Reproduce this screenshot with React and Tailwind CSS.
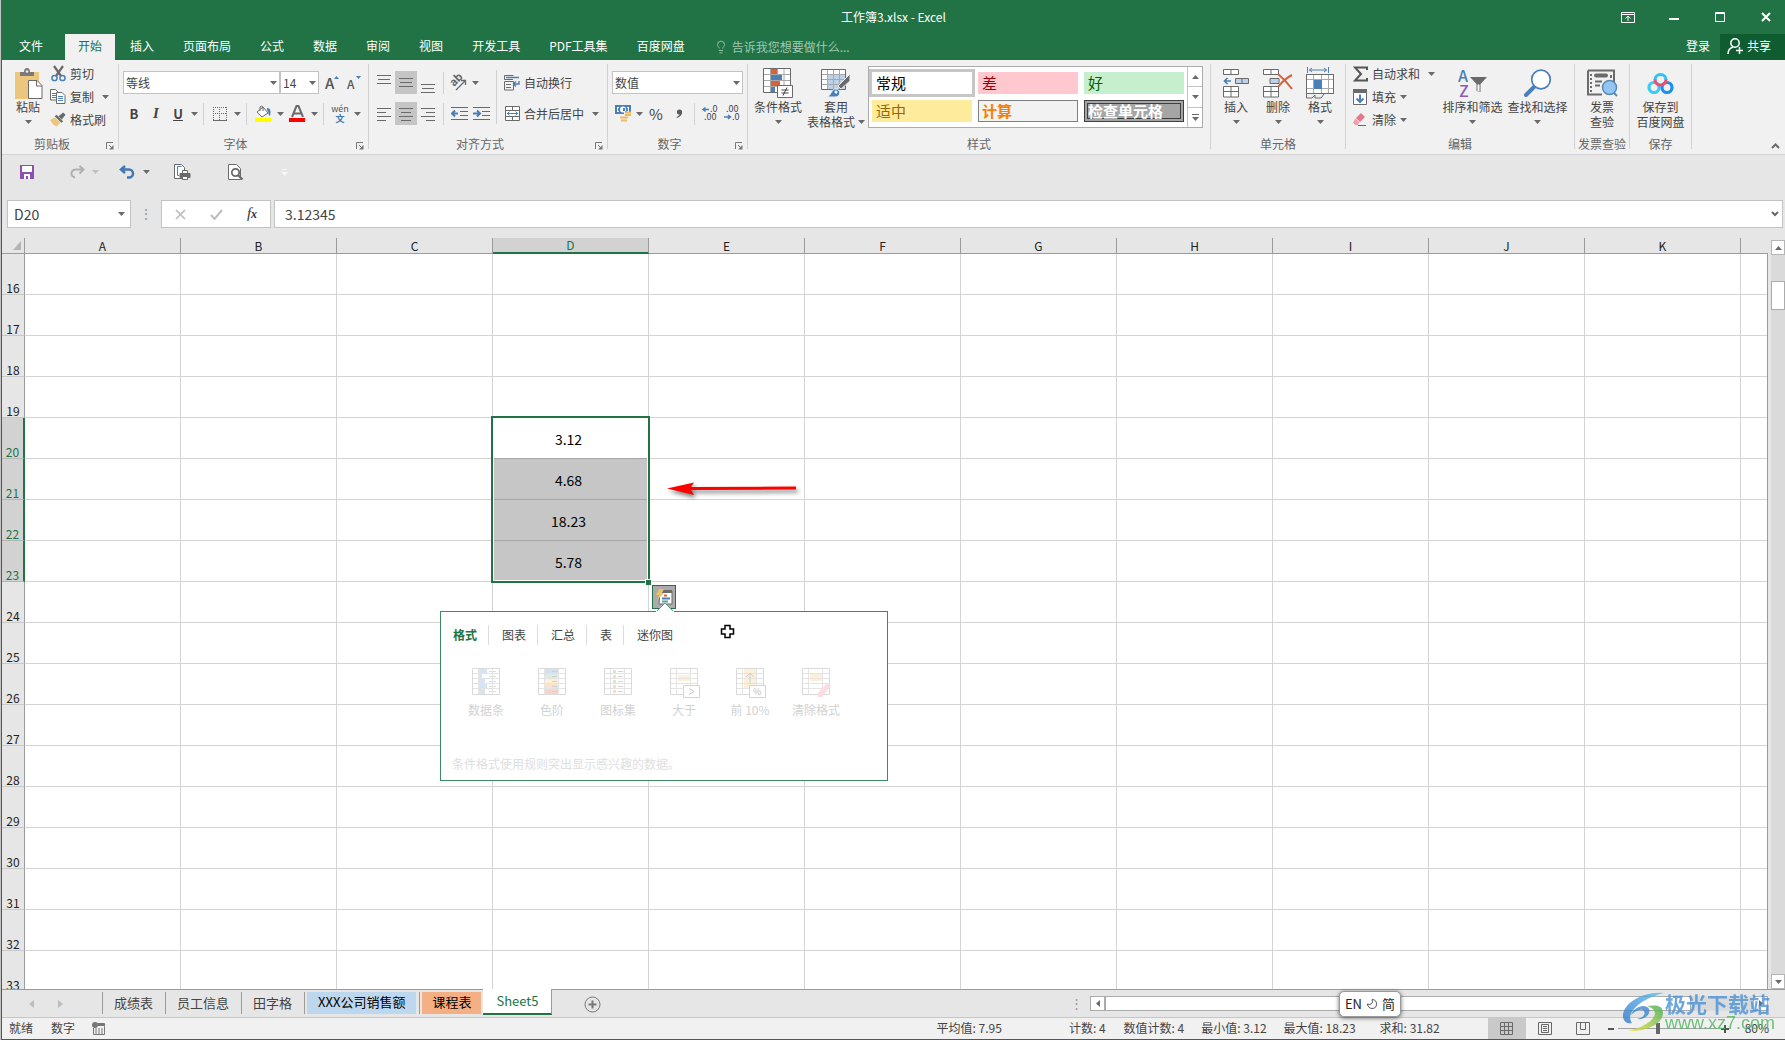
import React, { useState } from "react";
import clsx from "clsx";
import { Moon, Lightbulb } from "lucide-react";

const GRAY = "#6a6a6a";
const BLUE = "#4a7fb8";

const menuTabs = ["插入", "页面布局", "公式", "数据", "审阅", "视图", "开发工具", "PDF工具集", "百度网盘"];
const columns = ["A", "B", "C", "D", "E", "F", "G", "H", "I", "J", "K", ""];
const rows = Array.from({ length: 18 }, (_, i) => i + 16);
const values = { 20: "3.12", 21: "4.68", 22: "18.23", 23: "5.78" };

/* ---------- small pieces ---------- */

const Caret = ({ color = "#6a6a6a" }) => (
    <svg width="7" height="4" viewBox="0 0 7 4" className="shrink-0">
        <path d="M0 0h7L3.5 4z" fill={color} />
    </svg>
);

const CaretButton = ({ label }) => (
    <button aria-label={label} className="flex h-full w-[10px] shrink-0 items-center justify-center">
        <Caret />
    </button>
);

const Tool = ({ label, active, wide, children }) => (
    <button
        aria-label={label}
        className={clsx(
            "flex h-[23px] shrink-0 items-center justify-center",
            wide ? "w-6" : "w-[22px]",
            active && "bg-[#c5c5c5]"
        )}
    >
        {children}
    </button>
);

const Sep = () => <div className="mx-1 h-[22px] w-px shrink-0 bg-[#d2d2d2]" />;

const Divider = () => <div className="mb-[5px] mt-1 w-px shrink-0 bg-[#d2d2d2]" />;

const Group = ({ label, launcher, className, children }) => (
    <section className={clsx("flex shrink-0 flex-col", className)}>
        <div className="flex h-[76px]">{children}</div>
        <div className="flex h-4 items-center text-[#666]">
            <span className="flex-1 whitespace-nowrap text-center leading-4">{label}</span>
            {launcher && (
                <button aria-label={label + "设置"} className="mt-1 flex w-4 justify-end pr-1">
                    <svg width="8" height="8" viewBox="0 0 8 8" fill="none" stroke="#777">
                        <path d="M.5 7V.5H7M3 3l3 3" />
                        <path d="M7.500 3v4.500H3z" fill="#777" stroke="none" />
                    </svg>
                </button>
            )}
        </div>
    </section>
);

const BigButton = ({ icon, lines, caret = true, className }) => (
    <button className={clsx("flex shrink-0 flex-col items-center pt-[7px]", className)}>
        <span className="flex h-8 items-center">{icon}</span>
        <span className="whitespace-nowrap leading-[15px]">{lines[0]}</span>
        <span className="flex h-[15px] items-center gap-[3px] whitespace-nowrap leading-[15px]">
            {lines[1]}
            {caret && <Caret />}
        </span>
    </button>
);

const SmallButton = ({ icon, children, caret }) => (
    <button className="flex h-[23px] items-center gap-1 whitespace-nowrap">
        <span className="flex w-4 justify-center">{icon}</span>
        {children}
        {caret && <span className={caret}><Caret /></span>}
    </button>
);

const Combo = ({ label, value, className }) => (
    <div className={clsx("relative h-[23px] shrink-0 border border-[#c3c3c3] bg-white", className)}>
        <select aria-label={label} className="h-full w-full appearance-none bg-transparent pl-[2px] outline-none">
            <option>{value}</option>
        </select>
        <span className="pointer-events-none absolute right-[2px] top-[9px]"><Caret /></span>
    </div>
);

/* ---------- ribbon icons ---------- */

const PasteIcon = () => (
    <svg width="29" height="31" viewBox="0 0 29 31">
        <path d="M1 4h24v27H1z" fill="#edc67d" />
        <path d="M6 4h4a3 4 0 0 1 6 0h4v4H6z" fill="#7a7a7a" />
        <circle cx="13" cy="3.500" r="1.300" fill="#f0f0f0" />
        <path d="M14.500 12.500h8.500l5 5v13H14.500z" fill="#fff" stroke={GRAY} />
        <path d="M22.500 12.500v5.500h5.500" fill="none" stroke={GRAY} />
    </svg>
);
const CutIcon = () => (
    <svg width="15" height="17" viewBox="0 0 15 17" fill="none">
        <path d="M3 1l7 10M12 1L5 11" stroke={GRAY} strokeWidth="2.200" />
        <circle cx="3.500" cy="13" r="2.600" stroke={BLUE} strokeWidth="1.500" />
        <circle cx="11.500" cy="13" r="2.600" stroke={BLUE} strokeWidth="1.500" />
    </svg>
);
const CopyIcon = () => (
    <svg width="16" height="15" viewBox="0 0 16 15" fill="#fff" stroke={GRAY}>
        <path d="M.5.500h5l2.500 2.500v8H.5z" />
        <path d="M2 4.500h4M2 6.500h4M2 8.500h4" stroke={BLUE} />
        <path d="M6.500 3.500h5.500l3 3v8H6.500z" />
        <path d="M8 7.500h5M8 9.500h5M8 11.500h5" stroke={BLUE} />
    </svg>
);
const BrushIcon = () => (
    <svg width="17" height="15" viewBox="0 0 17 15">
        <path d="M0 8l5-3 6 6-4 4c-3-1-5-4-7-7z" fill="#edc67d" />
        <path d="M5 4l2-1.500 7 7L12 11z" fill={GRAY} />
        <path d="M9 4l5-4 2.500 2.500-4 5z" fill={GRAY} />
    </svg>
);
const GrowFont = ({ down }) => (
    <svg width="17" height="16" viewBox="0 0 17 16" className="overflow-visible">
        <text x="0" y="14" fontSize={down ? 12 : 15} fontWeight="500" fill="#555" fontFamily="Noto Sans CJK SC, sans-serif">A</text>
        <path d={down ? "M9 1h5l-2.500 3z" : "M9 4h5l-2.500-3z"} fill={BLUE} />
    </svg>
);
const BordersIcon = () => (
    <svg width="14" height="14" viewBox="0 0 14 14" fill="none" stroke={GRAY}>
        <path d="M0 .5h14M0 6.500h14M.5 0v13M6.500 0v13M13.500 0v13" strokeDasharray="1 1" />
        <path d="M0 13.500h14" />
    </svg>
);
const FillIcon = () => (
    <svg width="17" height="17" viewBox="0 0 17 17">
        <path d="M2 7l6-5 5 6-6 4z" fill="#fff" stroke={GRAY} />
        <path d="M5 6V2a2 2 0 0 1 3 0v4" fill="none" stroke={GRAY} />
        <path d="M12 3c4 0 4 4 3 8-2-1-1-4-3-6z" fill={BLUE} />
        <path d="M0 13h16v4H0z" fill="#ffff00" />
    </svg>
);
const FontColorIcon = () => (
    <svg width="17" height="17" viewBox="0 0 17 17">
        <path d="M3 12L7.500 1h2L14 12M5 8.500h7" fill="none" stroke={GRAY} strokeWidth="2" />
        <path d="M0 13h16v4H0z" fill="#ff0000" />
    </svg>
);
const PhoneticIcon = () => (
    <span className="flex flex-col items-center">
        <span className="text-[9px] leading-[10px] text-[#555]">wén</span>
        <span className="text-[9px] font-bold leading-[10px] text-[#3f76b4]">文</span>
    </span>
);
const LinesIcon = ({ d }) => (
    <svg width="14" height="22" viewBox="0 0 14 22" fill="none" stroke={GRAY}>
        <path d={d} />
    </svg>
);
const OrientIcon = () => (
    <svg width="18" height="16" viewBox="0 0 18 16" className="overflow-visible">
        <text x="0" y="0" fontSize="11" fontWeight="700" fill="#666" transform="translate(4 12) rotate(-45)" fontFamily="Noto Sans CJK SC, sans-serif">ab</text>
        <path d="M6 15l9-9M11 5.500h4.500V10" fill="none" stroke={GRAY} strokeWidth="1.300" />
    </svg>
);
const IndentIcon = ({ flip }) => (
    <svg width="17" height="14" viewBox="0 0 17 14" fill="none" stroke={GRAY}>
        <path d="M0 .5h17M9 4.500h8M9 8.500h8M0 12.500h17" />
        <path d={flip ? "M0 6.500h6M4 3.500l3 3-3 3" : "M7 6.500H1M4 3.500l-3 3 3 3"} stroke={BLUE} strokeWidth="2" />
    </svg>
);
const WrapIcon = () => (
    <svg width="16" height="16" viewBox="0 0 16 16" fill="none" stroke={GRAY}>
        <path d="M9 4.500H.5v-4H9.500M.5 6.500h9v8.500H.5zM2 9.500h5M2 12.500h5" />
        <path d="M2 2.500h13M15 6v3H10M12 6.500L9.500 9l2.500 2.500" stroke={BLUE} strokeWidth="1.400" />
    </svg>
);
const MergeIcon = () => (
    <svg width="15" height="15" viewBox="0 0 15 15" fill="#fff" stroke={GRAY}>
        <path d="M.5.5h14v14H.5zM.5 4.500h14M.5 10.500h14M7.500 0v4M7.500 11v4" />
        <path d="M2 7.500h11M4.500 5.500l-2 2 2 2M10.500 5.500l2 2-2 2" stroke={BLUE} fill="none" />
    </svg>
);
const MoneyIcon = () => (
    <svg width="17" height="17" viewBox="0 0 17 17">
        <path d="M0 0h16v9H0z" fill={BLUE} />
        <path d="M2 2h2v1H3v3h1v1H2zM14 2h-2v1h1v3h-1v1h2z" fill="#fff" />
        <circle cx="8" cy="4.500" r="3" fill="#fff" />
        <path d="M8 3h2v3H8z" fill={BLUE} />
        <path d="M9 7h8v10H4v-6h5z" fill="#f1f1f1" />
        <path d="M10 7.500h6M10 10h6M5 12.500h8M6 15.500h6" stroke="#edb965" strokeWidth="2" />
    </svg>
);
const DecimalIcon = ({ less }) => (
    <svg width="16" height="15" viewBox="0 0 16 15" fill="#444" fontSize="9" fontFamily="Noto Sans CJK SC, sans-serif" className="overflow-visible">
        <text x={less ? 2 : 8} y="6">{less ? ".00" : ".0"}</text>
        <text x={less ? 8 : 2} y="14">{less ? ".0" : ".00"}</text>
        <path d={less ? "M0 11h6M4 9l2.500 2L4 13" : "M7 3.500H1M3.500 1.500L1 3.500l2.500 2"} fill="none" stroke={BLUE} strokeWidth="1.500" />
    </svg>
);
const ConditionalIcon = () => (
    <svg width="30" height="31" viewBox="0 0 30 31">
        <path d="M.5.5h27v24H.5z" fill="#fff" />
        <path d="M.5 6.500h27M.5 12.500h27M.5 18.500h27M14.500 0v24M21 0v24M7.500 0v24" stroke="#a8a8a8" fill="none" />
        <path d="M8 1h6v5H8zM8 13h9v5H8z" fill="#d9603b" />
        <path d="M8 7h11v5H8zM8 19h4v5H8z" fill={BLUE} />
        <path d="M.5.5h27v24H.5z" fill="none" stroke={GRAY} />
        <path d="M14.500 17.500h15v12h-15z" fill="#fff" stroke={GRAY} />
        <path d="M18.500 22h7M18.500 25h7M24 19.500l-4 8" stroke="#444" />
    </svg>
);
const TableFormatIcon = () => (
    <svg width="30" height="29" viewBox="0 0 30 29">
        <path d="M.5.500h24v20H.5z" fill="#fff" />
        <path d="M7 5h17v15H7z" fill="#bdd1e8" />
        <path d="M.5 5.500h24M.5 10.500h24M.5 15.500h24M6.500 0v20M12.500 0v20M18.500 0v20" stroke="#a8a8a8" />
        <path d="M.5.500h24v20H.5z" fill="none" stroke={GRAY} />
        <path d="M29 5v7l-9 8-3-3z" fill={GRAY} stroke="#f0f0f0" />
        <path d="M6 28c4-1 4-8 9-8 5 0 5 8-1 8z" fill={BLUE} stroke="#f0f0f0" />
        <circle cx="15" cy="23" r="1.500" fill="#fff" />
    </svg>
);
const InsertIcon = () => (
    <svg width="27" height="29" viewBox="0 0 27 29" fill="#fff" stroke={GRAY}>
        <path d="M.5.500h15v5H.5zM8 .5v5M.5 17.500h15v10.500H.5zM8 17.500v10.500M.5 22.500h15" />
        <path d="M12.500 9.500h13v5h-13zM19 9.500v5" fill="#bdd1e8" />
        <path d="M8 12H2M4.500 9L1.500 12l3 3" fill="none" stroke={BLUE} strokeWidth="1.700" />
    </svg>
);
const DeleteIcon = () => (
    <svg width="30" height="29" viewBox="0 0 30 29" fill="#fff" stroke={GRAY}>
        <path d="M.5.500h15v5H.5zM8 .5v5M.5 17.500h15v10.500H.5zM8 17.500v10.500M.5 22.500h15" />
        <path d="M7 9.500h9v5H7z" fill="#bdd1e8" />
        <path d="M15 5c5 4 9 8 14 15M29 6c-6 3-10 7-14 12" fill="none" stroke="#d9603b" strokeWidth="2" />
    </svg>
);
const FormatIcon = () => (
    <svg width="28" height="32" viewBox="0 0 28 32" fill="#fff" stroke={GRAY}>
        <path d="M.5 7.500h27v19H.5z" />
        <path d="M.5 12.500h27M.5 21.500h27M7.500 7v19M15.500 7v19M22.500 7v19" stroke="#a8a8a8" />
        <path d="M.5 7.500h27v19H.5zM.5 27v4H6l3-3v3h6l3-4" fill="none" />
        <path d="M8 13h8v9H8z" fill={BLUE} stroke="none" />
        <path d="M1.500 0v6M22.500 0v6M3 3h18M6 1L3.500 3 6 5M18 1l2.500 2L18 5" fill="none" stroke={BLUE} />
    </svg>
);
const SumIcon = () => (
    <svg width="15" height="16" viewBox="0 0 15 16" fill="none" stroke="#555" strokeWidth="2">
        <path d="M14 4V1.500H2L8 8l-6 6.500h12V12" />
    </svg>
);
const FillDownIcon = () => (
    <svg width="14" height="16" viewBox="0 0 14 16">
        <path d="M.5.5h13v15H.5z" fill="#fff" stroke={GRAY} />
        <path d="M0 0h14v4H0z" fill={GRAY} />
        <path d="M7 5.500v7M3.500 9.500L7 13l3.500-3.500" fill="none" stroke={BLUE} strokeWidth="2" />
    </svg>
);
const EraserIcon = () => (
    <svg width="14" height="14" viewBox="0 0 14 14">
        <path d="M8 0l4 4-5 5-4-4z" fill="#e6788c" />
        <path d="M2.500 5.500l4 4-2 2.500H2L0 9.500z" fill="#ef9fac" />
        <path d="M5 12.500h8" stroke={GRAY} />
    </svg>
);
const SortIcon = () => (
    <svg width="29" height="29" viewBox="0 0 29 29" fontSize="16" fontWeight="500" fontFamily="Noto Sans CJK SC, sans-serif" className="overflow-visible">
        <text x="0" y="13" fill={BLUE}>A</text>
        <text x="1" y="28" fill="#9059b5">Z</text>
        <path d="M12 8h17l-6.500 7v8l-4-1v-7z" fill={GRAY} />
        <path d="M19.500 15.500v6.500l2 .500v-7z" fill="#fff" />
    </svg>
);
const FindIcon = () => (
    <svg width="28" height="28" viewBox="0 0 28 28">
        <path d="M2 26l9-9" stroke={BLUE} strokeWidth="4" strokeLinecap="round" />
        <circle cx="17" cy="10.500" r="9.300" fill="#fff" stroke={BLUE} strokeWidth="1.700" />
    </svg>
);
const InvoiceIcon = () => (
    <svg width="31" height="28" viewBox="0 0 31 28" fill="none" stroke="#6b6b6b">
        <path d="M1 1.500h26V14M1 1.500v24h14" strokeWidth="2" />
        <path d="M4 5v18" strokeDasharray="2 2" strokeWidth="2" />
        <path d="M9 6.500h10" strokeWidth="4" strokeLinecap="round" />
        <path d="M8 12.500h7M8 16.500h5M24 6v3" strokeWidth="2" />
        <circle cx="22.500" cy="18.500" r="7" fill="#93c6f3" stroke="#5c88b5" strokeWidth="1.500" />
        <path d="M27 24l3 3" stroke="#5c88b5" strokeWidth="2" />
    </svg>
);
const NetdiskIcon = () => (
    <svg width="27" height="25" viewBox="0 0 27 25" fill="none" strokeWidth="3.200">
        <circle cx="7" cy="16.500" r="5" stroke="#3ccbf6" />
        <circle cx="20" cy="16.500" r="5" stroke="#1b8ff0" />
        <path d="M8 9a5.500 5.500 0 0 1 11 0" stroke="#31c3f5" />
        <path d="M8 8.500a5.500 5.500 0 0 0 11 0" stroke="#f0506e" />
    </svg>
);

/* ---------- window header ---------- */

const TitleBar = () => (
    <header className="bg-[#217346] text-white">
        <div className="relative flex h-[34px] items-center justify-end">
            <h1 className="absolute inset-x-0 text-center leading-[18px]">工作簿3.xlsx - Excel</h1>
            <div className="relative flex items-center gap-2">
                <button aria-label="功能区显示选项" className="flex w-[38px] justify-center">
                    <svg width="14" height="11" viewBox="0 0 14 11" fill="none" stroke="#fff">
                        <path d="M.5.5h13v10H.5zM.5 2.500h13M7 9V4.500M4.500 6.500L7 4l2.500 2.500" />
                    </svg>
                </button>
                <button aria-label="最小化" className="flex w-[38px] justify-center">
                    <svg width="10" height="11"><path d="M0 6h10v2H0z" fill="#fff" /></svg>
                </button>
                <button aria-label="最大化" className="flex w-[38px] justify-center">
                    <svg width="10" height="10" fill="none" stroke="#fff"><path d="M.5.5h9v9H.5zM0 1.500h10" /></svg>
                </button>
                <button aria-label="关闭" className="flex w-[38px] justify-center">
                    <svg width="10" height="10" stroke="#fff" strokeWidth="2"><path d="M1 1l8 8M9 1L1 9" /></svg>
                </button>
            </div>
        </div>
        <div className="flex h-[26px] items-center">
            <nav className="flex h-full items-center">
                <button className="h-full pb-[2px] pl-[17px] pr-[22px]">文件</button>
                <button className="h-full bg-[#f1f1f1] px-[13px] pb-[2px] text-[#217346]">开始</button>
                <div className="w-px" />
                {menuTabs.map(tab => (
                    <button key={tab} className="h-full whitespace-nowrap pb-[2px] pl-[14px] pr-[15px]">{tab}</button>
                ))}
            </nav>
            <label className="ml-[14px] flex flex-1 items-center gap-1 text-[#a0c7b0]">
                <Lightbulb size={14} strokeWidth={1.5} />
                <input
                    placeholder="告诉我您想要做什么..."
                    className="w-[160px] bg-transparent outline-none placeholder:text-[#a0c7b0]"
                />
            </label>
            <a href="#login" className="px-[10px] pb-[2px]">登录</a>
            <button className="flex h-full items-center gap-1 bg-[#0e5c2f] pb-[2px] pl-[7px] pr-[14px]">
                <svg width="16" height="17" viewBox="0 0 16 17" fill="none" stroke="#fff" strokeWidth="1.500">
                    <circle cx="8" cy="5" r="4.200" />
                    <path d="M1 16c0-4 2-6 5-7M12.500 9v7M9 12.500h7" />
                </svg>
                共享
            </button>
        </div>
    </header>
);

const styleCells = [
    ["常规", "px-1 bg-white text-black ring-[3px] ring-[#c6c6c6]"],
    ["差", "px-1 bg-[#ffc7ce] text-[#9c0006]"],
    ["好", "px-1 bg-[#c6efce] text-[#006100]"],
    ["适中", "px-1 bg-[#ffeb9c] text-[#9c6500]"],
    ["计算", "px-[3px] bg-[#f2f2f2] border border-[#7f7f7f] font-bold text-[#fa7d00]"],
    ["检查单元格", "bg-[#a5a5a5] border-4 border-double border-[#3f3f3f] font-bold text-white"],
];

const Ribbon = () => (
    <div className="flex h-[95px] overflow-hidden border-b border-[#d2d2d2] bg-[#f1f1f1] text-[#444]">
        <Group label="剪贴板" launcher className="w-[116px]">
            <BigButton icon={<PasteIcon />} lines={["粘贴"]} className="ml-2 w-[36px]" />
            <div className="ml-1 flex flex-col pt-[2px]">
                <SmallButton icon={<CutIcon />}>剪切</SmallButton>
                <SmallButton icon={<CopyIcon />} caret="ml-1">复制</SmallButton>
                <SmallButton icon={<BrushIcon />}>格式刷</SmallButton>
            </div>
        </Group>
        <Divider />
        <Group label="字体" launcher className="w-[249px]">
            <div className="flex flex-col gap-2 pl-1 pt-[11px]">
                <div className="flex">
                    <Combo label="字体" value="等线" className="w-[157px]" />
                    <Combo label="字号" value="14" className="w-[39px]" />
                    <div className="ml-[3px] flex">
                        <Tool label="增大字号"><GrowFont /></Tool>
                        <Tool label="减小字号"><GrowFont down /></Tool>
                    </div>
                </div>
                <div className="flex items-center">
                    <Tool label="加粗"><b className="text-[13px]">B</b></Tool>
                    <Tool label="倾斜"><i className="font-['Liberation_Serif'] text-[15px] font-bold">I</i></Tool>
                    <Tool label="下划线"><u className="text-[13px] font-bold">U</u></Tool>
                    <CaretButton label="下划线选项" />
                    <Sep />
                    <Tool wide label="边框"><BordersIcon /></Tool>
                    <CaretButton label="边框选项" />
                    <Sep />
                    <Tool wide label="填充颜色"><FillIcon /></Tool>
                    <CaretButton label="填充颜色选项" />
                    <Tool wide label="字体颜色"><FontColorIcon /></Tool>
                    <CaretButton label="字体颜色选项" />
                    <Sep />
                    <Tool wide label="拼音"><PhoneticIcon /></Tool>
                    <CaretButton label="拼音选项" />
                </div>
            </div>
        </Group>
        <Divider />
        <Group label="对齐方式" launcher className="w-[238px]">
            <div className="flex flex-col gap-2 pl-1 pt-[11px]">
                <div className="flex items-center">
                    <Tool label="顶端对齐"><LinesIcon d="M0 3.500h14M1 7.500h12M0 11.500h14" /></Tool>
                    <Tool label="垂直居中" active><LinesIcon d="M0 6.500h14M1 10.500h12M0 14.500h14" /></Tool>
                    <Tool label="底端对齐"><LinesIcon d="M0 12.500h14M1 16.500h12M0 20.500h14" /></Tool>
                    <Sep />
                    <Tool label="方向"><OrientIcon /></Tool>
                    <CaretButton label="方向选项" />
                </div>
                <div className="flex items-center">
                    <Tool label="左对齐"><LinesIcon d="M0 5.500h14M0 9.500h9M0 13.500h14M0 17.500h9" /></Tool>
                    <Tool label="居中" active><LinesIcon d="M0 5.500h14M2 9.500h10M0 13.500h14M2 17.500h10" /></Tool>
                    <Tool label="右对齐"><LinesIcon d="M0 5.500h14M5 9.500h9M0 13.500h14M5 17.500h9" /></Tool>
                    <Sep />
                    <Tool label="减少缩进量"><IndentIcon /></Tool>
                    <Tool label="增加缩进量"><IndentIcon flip /></Tool>
                </div>
            </div>
            <div className="ml-1 mt-[10px] h-[54px] w-px bg-[#d2d2d2]" />
            <div className="flex flex-col gap-2 pl-[7px] pt-[11px]">
                <SmallButton icon={<WrapIcon />}>自动换行</SmallButton>
                <SmallButton icon={<MergeIcon />} caret="ml-1">合并后居中</SmallButton>
            </div>
        </Group>
        <Divider />
        <Group label="数字" launcher className="w-[139px]">
            <div className="flex flex-col gap-2 pl-1 pt-[11px]">
                <Combo label="数字格式" value="数值" className="w-[131px]" />
                <div className="flex items-center">
                    <Tool label="会计数字格式"><MoneyIcon /></Tool>
                    <CaretButton label="会计数字格式选项" />
                    <Tool wide label="百分比样式"><span className="text-[15px]">%</span></Tool>
                    <Tool label="千位分隔样式">
                        <svg width="7" height="9" viewBox="0 0 7 9" fill="#5a5a5a">
                            <circle cx="3.500" cy="3" r="2.600" />
                            <path d="M6 3c0 3-2 5-5 6l-.5-1C3 7 4 5.500 4 4z" />
                        </svg>
                    </Tool>
                    <Sep />
                    <Tool label="增加小数位数"><DecimalIcon /></Tool>
                    <Tool label="减少小数位数"><DecimalIcon less /></Tool>
                </div>
            </div>
        </Group>
        <Divider />
        <Group label="样式" className="w-[462px]">
            <BigButton icon={<ConditionalIcon />} lines={["条件格式"]} className="ml-[3px] w-[54px]" />
            <BigButton icon={<TableFormatIcon />} lines={["套用", "表格格式"]} className="w-[62px]" />
            <div className="ml-px mt-[6px] flex h-[62px] w-[335px] border border-[#ababab] bg-white">
                <div className="grid flex-1 grid-cols-3 content-start gap-[6px] px-[3px] pt-[5px]">
                    {styleCells.map(([name, look]) => (
                        <button key={name} className={clsx("flex h-[22px] items-center whitespace-nowrap text-[15px] leading-[18px]", look)}>
                            {name}
                        </button>
                    ))}
                </div>
                <div className="flex w-[15px] flex-col divide-y divide-[#c3c3c3] border-l border-[#c3c3c3]">
                    <button aria-label="上一行" className="flex flex-1 items-center justify-center"><span className="rotate-180"><Caret /></span></button>
                    <button aria-label="下一行" className="flex flex-1 items-center justify-center"><Caret /></button>
                    <button aria-label="其他" className="flex flex-1 flex-col items-center justify-center gap-[2px]">
                        <span className="h-px w-[7px] bg-[#6a6a6a]" />
                        <Caret />
                    </button>
                </div>
            </div>
        </Group>
        <Divider />
        <Group label="单元格" className="w-[134px]">
            <BigButton icon={<InsertIcon />} lines={["插入"]} className="ml-1 w-[42px]" />
            <BigButton icon={<DeleteIcon />} lines={["删除"]} className="w-[42px]" />
            <BigButton icon={<FormatIcon />} lines={["格式"]} className="w-[42px]" />
        </Group>
        <Divider />
        <Group label="编辑" className="w-[228px]">
            <div className="flex w-[94px] flex-col pl-[6px] pt-[2px]">
                <SmallButton icon={<SumIcon />} caret="ml-1">自动求和</SmallButton>
                <SmallButton icon={<FillDownIcon />} caret="ml-0">填充</SmallButton>
                <SmallButton icon={<EraserIcon />} caret="ml-0">清除</SmallButton>
            </div>
            <BigButton icon={<SortIcon />} lines={["排序和筛选"]} className="w-[65px]" />
            <BigButton icon={<FindIcon />} lines={["查找和选择"]} className="w-[65px]" />
        </Group>
        <Divider />
        <Group label="发票查验" className="w-[54px]">
            <BigButton icon={<InvoiceIcon />} lines={["发票", "查验"]} caret={false} className="w-full" />
        </Group>
        <Divider />
        <Group label="保存" className="w-[61px]">
            <BigButton icon={<NetdiskIcon />} lines={["保存到", "百度网盘"]} caret={false} className="w-full" />
        </Group>
        <Divider />
        <div className="flex flex-1 items-end justify-end pb-[5px] pr-[5px]">
            <button aria-label="折叠功能区">
                <svg width="9" height="6" fill="none" stroke={GRAY} strokeWidth="2"><path d="M1 5l3.500-3.500L8 5" /></svg>
            </button>
        </div>
    </div>
);

const QuickAccess = () => (
    <div className="flex h-[45px] items-start pl-[18px] pt-[9px]">
        <button aria-label="保存" className="flex h-4 w-[14px] items-center">
            <svg width="14" height="14" viewBox="0 0 14 14">
                <path d="M0 0h14v14H0z" fill="#8c50ae" />
                <path d="M2 1h10v6H2zM4 9h6v5H8v-3H6v3H4z" fill="#fff" />
            </svg>
        </button>
        <button aria-label="恢复" className="ml-9 flex h-4 items-center gap-[7px]">
            <svg width="15" height="14" viewBox="0 0 15 14" fill="none" stroke="#b0b0b0" strokeWidth="2">
                <path d="M13 4.500H6a4 4 0 0 0-1 8M9.500 1l4 3.500-4 4" />
            </svg>
            <Caret color="#c0c0c0" />
        </button>
        <button aria-label="撤消" className="ml-5 flex h-4 items-center gap-2">
            <svg width="16" height="14" viewBox="0 0 16 14" fill="none" stroke="#4579b4" strokeWidth="2.500">
                <path d="M2 4.500h8a4 4 0 0 1 0 8H8M6 1L2 4.500 6 8" />
            </svg>
            <Caret />
        </button>
        <button aria-label="快速打印" className="ml-6 flex h-4 items-center">
            <svg width="17" height="16" viewBox="0 0 17 16" fill="#fff" stroke={GRAY}>
                <path d="M.5.500h7l3 3v11H.5z" />
                <path d="M7.500 2.500H3.500v9H5" stroke={BLUE} fill="none" />
                <path d="M8.500 6.500h5v3h-5z" />
                <path d="M6 9.500h10v4H6z" fill={GRAY} />
                <path d="M8.500 12.500h5v3h-5z" />
            </svg>
        </button>
        <button aria-label="打印预览" className="ml-[37px] flex h-4 items-center">
            <svg width="16" height="16" viewBox="0 0 16 16" fill="#fff" stroke={GRAY}>
                <path d="M.5.500h8l4 4v11H.5z" />
                <circle cx="7.500" cy="8.500" r="3.700" strokeWidth="1.800" />
                <path d="M10 11l4.500 4.500" strokeWidth="2.200" />
            </svg>
        </button>
        <button aria-label="自定义快速访问工具栏" className="ml-[37px] flex h-4 flex-col items-center justify-center gap-[2px]">
            <span className="h-px w-[5px] bg-[#f6f6f6]" />
            <Caret color="#f6f6f6" />
        </button>
    </div>
);

const FormulaBar = () => {
    const [formula, setFormula] = useState("3.12345");
    return (
        <div className="flex h-[28px] pl-[5px] pr-[2px] text-sm text-[#444]">
            <div className="flex w-[124px] items-center border border-[#c3c3c3] bg-white pl-[6px] pr-[5px]">
                <input aria-label="名称框" defaultValue="D20" className="w-full min-w-0 bg-transparent outline-none" />
                <button aria-label="名称列表"><Caret /></button>
            </div>
            <span className="w-[30px] text-center leading-[26px] text-[#999]">⋮</span>
            <div className="flex w-[110px] items-center border border-[#c3c3c3] bg-white">
                <button aria-label="取消" className="flex w-9 justify-center">
                    <svg width="11" height="11" stroke="#bdbdbd" strokeWidth="1.700"><path d="M1 1l9 9M10 1L1 10" /></svg>
                </button>
                <button aria-label="输入" className="flex w-9 justify-center">
                    <svg width="13" height="11" stroke="#bdbdbd" strokeWidth="2" fill="none"><path d="M1 6l3.500 4L12 1" /></svg>
                </button>
                <button aria-label="插入函数" className="w-9 font-['Liberation_Serif'] text-[15px] italic text-[#333]">
                    f<span className="text-xs font-bold">x</span>
                </button>
            </div>
            <div className="ml-[3px] flex flex-1 items-center border border-[#c3c3c3] bg-white pl-[10px] pr-[3px]">
                <input
                    aria-label="编辑栏"
                    value={formula}
                    onChange={e => setFormula(e.target.value)}
                    className="flex-1 bg-transparent outline-none"
                />
                <button aria-label="展开编辑栏">
                    <svg width="8" height="6" fill="none" stroke={GRAY} strokeWidth="2"><path d="M1 1l3 3 3-3" /></svg>
                </button>
            </div>
        </div>
    );
};

/* ---------- sheet ---------- */

const Grid = () => (
    <table className="w-full table-fixed border-separate border-spacing-0 bg-white text-xs">
        <colgroup>
            <col className="w-[23px]" />
            {columns.map((c, i) => (
                <col key={i} className={c ? "w-[156px]" : ""} />
            ))}
        </colgroup>
        <thead>
            <tr className="h-4 bg-[#e6e6e6]">
                <th className="border-b border-r border-[#9b9b9b] p-0">
                    <svg width="8" height="9" className="ml-auto mr-[3px]"><path d="M8 0v9H0z" fill="#b4b4b4" /></svg>
                </th>
                {columns.map((c, i) => (
                    <th
                        key={i}
                        className={clsx(
                            "h-4 border-r p-0 font-normal leading-[14px]",
                            c === "D"
                                ? "border-b-2 border-b-[#217346] border-r-[#9b9b9b] bg-[#d2d2d2] text-[#217346]"
                                : "border-b border-[#9b9b9b] text-[#222]",
                            !c && "border-r-0"
                        )}
                    >
                        {c}
                    </th>
                ))}
            </tr>
        </thead>
        <tbody>
            {rows.map(r => {
                const picked = r in values;
                return (
                    <tr key={r}>
                        <th
                            className={clsx(
                                "h-[41px] border-b p-0 align-bottom font-normal leading-3",
                                picked
                                    ? "border-b-[#b5b5b5] border-r-2 border-r-[#217346] bg-[#d2d2d2] text-[#217346]"
                                    : "border-b-[#c8c8c8] border-r border-r-[#9b9b9b] bg-[#e6e6e6] text-[#222]"
                            )}
                        >
                            {r}
                        </th>
                        {columns.map((c, i) => {
                            const filled = picked && c === "D";
                            return (
                                <td
                                    key={i}
                                    className={clsx(
                                        "h-[41px] border-b p-0 text-center text-sm text-black",
                                        c && "border-r",
                                        filled ? "border-[#a6a6a6] pr-1 pt-[2px]" : "border-[#d4d4d4]",
                                        filled && r !== 20 && "bg-[#c6c6c6]"
                                    )}
                                >
                                    {filled && values[r]}
                                </td>
                            );
                        })}
                    </tr>
                );
            })}
        </tbody>
    </table>
);

// preview thumbnail: fills go under the grid lines, marks go over them
const TinyGrid = ({ under, over }) => (
    <svg width="32" height="32" viewBox="0 0 32 32" fill="none">
        <path d="M2.500 1.500h27v26h-27z" fill="#fff" />
        {under}
        <path d="M2.500 6.500h27M2.500 11.500h27M2.500 16.500h27M2.500 21.500h27M8.500 1v26M22.500 1v26" stroke="#e4e4e4" />
        <path d="M2.500 1.500h27v26h-27z" stroke="#dadada" />
        {over}
    </svg>
);

const quickActions = [
    {
        name: "数据条",
        under: <path d="M9 2h8v5H9zM9 7h3v5H9zM9 12h6v5H9zM9 17h8v5H9zM9 22h6v5H9z" fill="#d8e4f1" />,
        over: <path d="M19 4.500h7M19 9.500h7M19 14.500h7M19 19.500h7M19 24.500h7" stroke="#dcdcdc" strokeDasharray="3 1" />,
    },
    {
        name: "色阶",
        under: (
            <g>
                <path d="M9 2h13v5H9z" fill="#d3e1f0" />
                <path d="M9 7h13v5H9z" fill="#dcebe4" />
                <path d="M9 12h13v5H9z" fill="#fbf0d4" />
                <path d="M9 17h13v5H9z" fill="#fbe2cc" />
                <path d="M9 22h13v5H9z" fill="#f6d5cc" />
            </g>
        ),
        over: <path d="M16 4.500h5M16 9.500h5M16 14.500h5M16 19.500h5M16 24.500h5" stroke="#cfcfcf" />,
    },
    {
        name: "图标集",
        under: (
            <g>
                <path d="M11 3h3v3h-3zM11 13h3v3h-3z" fill="#d3e8de" />
                <path d="M11 8h3v3h-3zM11 18h3v3h-3zM11 23h3v3h-3z" fill="#f8dccb" />
            </g>
        ),
        over: <path d="M16 4.500h5M16 9.500h5M16 14.500h5M16 19.500h5M16 24.500h5" stroke="#d4d4d4" />,
    },
    {
        name: "大于",
        under: <path d="M10 8h13v6H10z" fill="#fcf0d8" />,
        over: (
            <g>
                <path d="M15.500 18.500h16v12h-16z" fill="#fff" stroke="#d4d4d4" />
                <path d="M21 21.500l5 3-5 3" stroke="#c4c4c4" />
            </g>
        ),
    },
    {
        name: "前 10%",
        under: <path d="M10 2h13v20H10z" fill="#fcf0d8" />,
        over: (
            <g>
                <path d="M16 17V6M12 10l4-4 4 4" stroke="#cfcfcf" />
                <path d="M15.500 18.500h16v12h-16z" fill="#fff" stroke="#d4d4d4" />
                <text x="19" y="28" fontSize="9" fill="#bbb">%</text>
            </g>
        ),
    },
    {
        name: "清除格式",
        under: <path d="M10 7h13v7H10z" fill="#fcf0d8" />,
        over: <path d="M17 27L27 16l4 3-9 11h-4z" fill="#f9dde2" />,
    },
];

const QuickAnalysis = () => (
    <div role="dialog" aria-label="快速分析" className="absolute left-[438px] top-[373px] w-[448px] border border-[#3d8a60] bg-white">
        <div className="flex h-[46px] items-center pl-3 text-[#444]">
            {["格式", "图表", "汇总", "表", "迷你图"].map((t, i) => (
                <React.Fragment key={t}>
                    {i > 0 && <span className="ml-[11px] mr-[13px] h-5 w-px bg-[#dcdcdc]" />}
                    <button className={i === 0 ? "font-bold text-[#217346]" : ""}>{t}</button>
                </React.Fragment>
            ))}
        </div>
        <div className="flex pl-3 pt-[9px] text-[#d2d2d2]">
            {quickActions.map(({ name, under, over }) => (
                <button key={name} disabled className="flex w-[66px] flex-col items-center whitespace-nowrap leading-[18px]">
                    <TinyGrid under={under} over={over} />
                    <span className="mt-[2px]">{name}</span>
                </button>
            ))}
        </div>
        <p className="mb-[7px] mt-[35px] pl-[11px] leading-[19px] text-[#dedede]">条件格式使用规则突出显示感兴趣的数据。</p>
        <svg width="18" height="10" viewBox="0 0 18 10" className="absolute left-[215px] top-[-10px]">
            <path d="M0 10L9 1l9 9z" fill="#fff" stroke="none" />
            <path d="M0 10L9 1l9 9" fill="none" stroke="#5f9f7c" />
        </svg>
        <span className="absolute left-[215px] top-[-1px] h-[2px] w-[18px] bg-white" />
    </div>
);

const Sheet = () => (
    <main className="mt-[10px] flex min-h-0 flex-1">
        <div className="relative mr-[3px] min-w-0 flex-1 overflow-hidden">
            <Grid />
            <div className="pointer-events-none absolute right-0 top-[15px] h-full w-px bg-[#9b9b9b]" />
            <div className="absolute left-[489px] top-[178px] h-[167px] w-[159px] border-2 border-[#217346] ring-1 ring-inset ring-white" />
            <div className="absolute left-[643px] top-[341px] h-[6px] w-[6px] border-l border-t border-white bg-[#217346]" />
            <svg width="136" height="22" viewBox="0 0 136 22" className="absolute left-[664px] top-[240px] drop-shadow-[2px_3px_2px_rgba(0,0,0,0.5)]">
                <path d="M1 10.500L28 4.500l-3 4.500 105-.5v3L25 12l3 5z" fill="#ff0000" />
            </svg>
            <button aria-label="快速分析" className="absolute left-[650px] top-[347px] flex h-6 w-6 items-center justify-center border border-[#217346] bg-[#ababab]">
                <svg width="17" height="17" viewBox="0 0 17 17">
                    <path d="M4 2h12v13H3z" fill="#fff" stroke="#6a6a6a" />
                    <path d="M5 1h11v3H5z" fill="#6a6a6a" />
                    <path d="M8 6.500h3" stroke="#d9603b" strokeWidth="2" />
                    <path d="M6 9.500h8" stroke={BLUE} strokeWidth="2" />
                    <path d="M6 12.500h6" stroke="#5fa58c" strokeWidth="2" />
                    <path d="M3 0h5L6 4h2L1 11l2-5H0z" fill="#edc06c" />
                </svg>
            </button>
            <QuickAnalysis />
            <svg width="15" height="15" viewBox="0 0 15 15" className="absolute left-[718px] top-[386px]">
                <path d="M5 1.500h5V5h3.500v5H10v3.500H5V10H1.500V5H5z" fill="#fff" stroke="#000" strokeWidth="1.500" />
            </svg>
        </div>
        <div className="mt-[2px] flex w-[14px] flex-col bg-[#dadada]">
            <button aria-label="向上滚动" className="flex h-[15px] items-center justify-center border border-[#b5b5b5] bg-white"><span className="rotate-180"><Caret /></span></button>
            <div className="mt-[26px] h-[29px] border border-[#ababab] bg-white" />
            <div className="flex-1" />
            <button aria-label="向下滚动" className="flex h-[15px] items-center justify-center border border-[#b5b5b5] bg-white"><Caret /></button>
        </div>
    </main>
);

/* ---------- bottom bars ---------- */

const SheetTabs = () => (
    <div className="flex h-[28px] border-t border-[#9b9b9b] text-[13px] text-[#444]">
        <div className="flex w-[100px] items-center gap-[24px] pl-[27px]">
            <button aria-label="上一个工作表"><svg width="5" height="8"><path d="M5 0v8L0 4z" fill="#bdbdbd" /></svg></button>
            <button aria-label="下一个工作表"><svg width="5" height="8"><path d="M0 0v8l5-4z" fill="#bdbdbd" /></svg></button>
        </div>
        <div className="flex items-start">
            {["成绩表", "员工信息", "田字格"].map(t => (
                <button key={t} className="mt-[2px] h-[22px] whitespace-nowrap border-l border-[#9b9b9b] pl-[11px] pr-3 leading-5">{t}</button>
            ))}
            <button className="mt-[2px] h-[22px] whitespace-nowrap border-l border-[#9b9b9b] pl-[2px] text-black">
                <span className="block bg-[#bdd7ee] px-[11px] pb-[2px] leading-5">XXX公司销售额</span>
            </button>
            <button className="ml-[3px] mt-[2px] h-[22px] whitespace-nowrap border-l border-[#9b9b9b] pl-[2px] text-black">
                <span className="block bg-[#f4b084] px-[10px] pb-[2px] leading-5">课程表</span>
            </button>
            <button className="-mt-px ml-[2px] h-[26px] border-b-2 border-r border-b-[#217346] border-r-[#9b9b9b] bg-white px-[13px] text-[#217346]">
                Sheet5
            </button>
            <button aria-label="新工作表" className="ml-8 mt-[6px]">
                <svg width="17" height="17" viewBox="0 0 17 17" fill="none" stroke="#777">
                    <circle cx="8.500" cy="8.500" r="7.500" />
                    <path d="M4.500 8.500h8M8.500 4.500v8" strokeWidth="2" />
                </svg>
            </button>
        </div>
        <div className="flex-1" />
        <span className="w-[28px] text-center leading-[26px] text-[#999]">⋮</span>
        <div className="mr-[17px] mt-[6px] flex h-[15px] w-[38%] bg-[#dadada]">
            <button aria-label="向左滚动" className="flex w-[15px] items-center justify-center border border-[#ababab] bg-white">
                <svg width="4" height="7"><path d="M4 0v7L0 3.500z" fill={GRAY} /></svg>
            </button>
            <div className="flex-1 border border-[#ababab] bg-white" />
            <div className="w-[62px]" />
            <button aria-label="向右滚动" className="flex w-[15px] items-center justify-center border border-[#ababab] bg-white">
                <svg width="4" height="7"><path d="M0 0v7l4-3.500z" fill={GRAY} /></svg>
            </button>
        </div>
    </div>
);

const StatusBar = () => (
    <footer className="flex h-[22px] items-center border-t border-[#c6c6c6] bg-[#f1f1f1] pl-[7px] text-[#444]">
        <span className="pb-[2px]">就绪</span>
        <span className="ml-[18px] pb-[2px]">数字</span>
        <button aria-label="录制宏" className="ml-[17px]">
            <svg width="13" height="13" viewBox="0 0 13 13" fill="none" stroke="#777">
                <path d="M5 1.500h7.500v3M1.500 6v6.500h11V4.500" />
                <path d="M6 1h6v3H6z" fill="#777" stroke="none" />
                <path d="M3 7h9M3 9h9M3 11h9" strokeDasharray="2 1" />
                <circle cx="3" cy="3" r="3" fill="#777" stroke="none" />
            </svg>
        </button>
        <div className="flex-1" />
        <div className="flex whitespace-nowrap pb-[2px]">
            <span className="mr-[67px]">平均值: 7.95</span>
            <span className="mr-[18px]">计数: 4</span>
            <span className="mr-[17px]">数值计数: 4</span>
            <span className="mr-[17px]">最小值: 3.12</span>
            <span className="mr-[24px]">最大值: 18.23</span>
            <span className="mr-[48px]">求和: 31.82</span>
        </div>
        <button aria-label="普通" className="flex h-full w-[38px] items-center justify-center bg-[#c9c9c9]">
            <svg width="13" height="13" fill="none" stroke={GRAY}><path d="M.5.5h12v12H.5zM.5 4.500h12M.5 8.500h12M4.500 0v13M8.500 0v13" /></svg>
        </button>
        <button aria-label="页面布局" className="flex h-full w-[38px] items-center justify-center">
            <svg width="14" height="13" fill="none" stroke={GRAY}><path d="M.5.5h13v12H.5zM3.500 2.500h7v8h-7zM5 4.500h4M5 6.500h4M5 8.500h4" /></svg>
        </button>
        <button aria-label="分页预览" className="flex h-full w-[38px] items-center justify-center">
            <svg width="14" height="13" fill="none" stroke={GRAY}><path d="M.5.5h13v12H.5zM4.500 0v7.500h5V0" /></svg>
        </button>
        <button aria-label="缩小" className="ml-[2px] flex w-[14px] justify-center"><span className="h-[2px] w-[6px] bg-[#555]" /></button>
        <input
            type="range"
            aria-label="显示比例"
            defaultValue={40}
            className="h-3 w-[100px] appearance-none bg-[linear-gradient(#a0a0a0,#a0a0a0)] bg-[length:100%_1px] bg-center bg-no-repeat [&::-webkit-slider-thumb]:h-[11px] [&::-webkit-slider-thumb]:w-1 [&::-webkit-slider-thumb]:appearance-none [&::-webkit-slider-thumb]:bg-[#666]"
        />
        <button aria-label="放大" className="flex w-[14px] justify-center">
            <svg width="8" height="8" stroke="#555" strokeWidth="2"><path d="M0 4h8M4 0v8" /></svg>
        </button>
        <button className="ml-[13px] mr-4 pb-[2px]">80%</button>
    </footer>
);

const Watermark = () => (
    <div className="pointer-events-none absolute bottom-[7px] right-[10px] flex items-center opacity-80">
        <svg width="43" height="40" viewBox="0 0 43 40">
            <defs>
                <linearGradient id="wmGreen" x1="0" y1="1" x2="1" y2="0">
                    <stop offset="0" stopColor="#f0df3c" />
                    <stop offset="1" stopColor="#3fae5a" />
                </linearGradient>
                <linearGradient id="wmBlue" x1="0" y1="1" x2="1" y2="0">
                    <stop offset="0" stopColor="#2f78c8" />
                    <stop offset="1" stopColor="#5fc0ef" />
                </linearGradient>
            </defs>
            <path d="M42 1C20-1 0 12 1 25c1 6 6 7 9 6C3 22 17 7 42 1z" fill="url(#wmBlue)" />
            <path d="M9 23c3-8 14-12 18-6 2 6-5 11-12 10 6-1 9-5 7-8-3-3-9 0-13 4z" fill="#3c86cf" />
            <path d="M25 14c8-1 16-1 16 7 0 11-17 19-35 18 13-3 25-9 27-17 0-4-3-6-8-8z" fill="url(#wmGreen)" />
        </svg>
        <div className="flex flex-col whitespace-nowrap">
            <span className="text-[21px] font-bold leading-[22px] text-[#4a92d8]">极光下载站</span>
            <span className="font-['Liberation_Sans'] text-[18px] leading-[18px] text-[#4fb45e]">www.xz7.com</span>
        </div>
    </div>
);

const App = () => (
    <div className="h-screen overflow-hidden bg-[#c4c4c4] pl-px font-['Noto_Sans_CJK_SC',sans-serif] text-xs">
        <div className="relative flex h-full flex-col border-b border-l border-[#217346] bg-[#e6e6e6]">
            <TitleBar />
            <Ribbon />
            <QuickAccess />
            <FormulaBar />
            <Sheet />
            <SheetTabs />
            <StatusBar />
            <div className="absolute bottom-[22px] right-[384px] flex h-[26px] items-center gap-1 rounded-[5px] border border-[#999] bg-white px-[5px] text-[13px] text-[#222] shadow-[0_1px_4px_rgba(0,0,0,0.6)]">
                EN
                <Moon size={12} strokeWidth={1.5} className="-scale-x-100" />
                简
            </div>
            <Watermark />
        </div>
    </div>
);

export default App;
